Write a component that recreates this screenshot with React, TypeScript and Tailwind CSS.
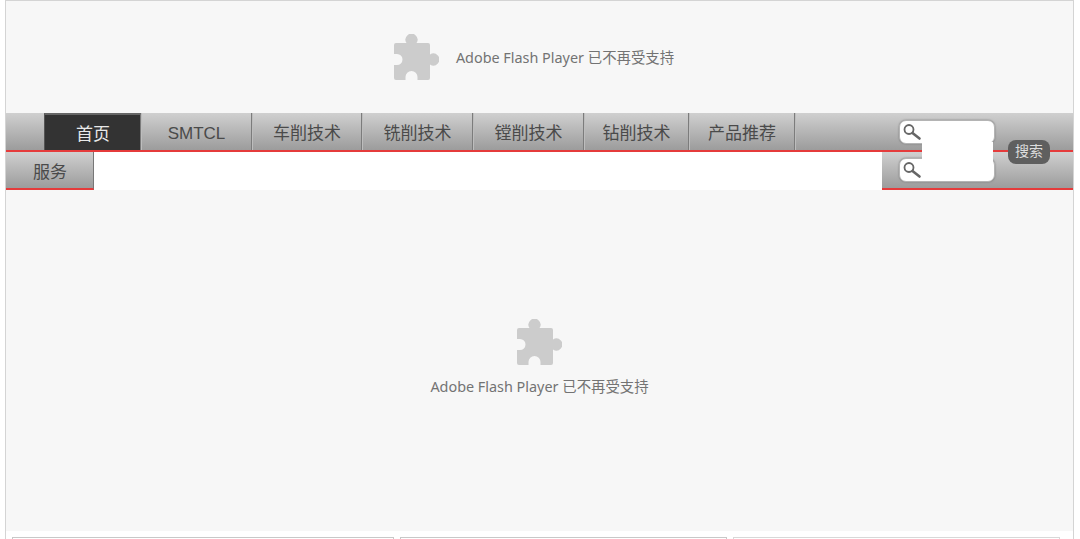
import React from 'react';

const navItems = [
  { label: '首页', width: 'w-[97px]', active: true },
  { label: 'SMTCL', width: 'w-[111px]' },
  { label: '车削技术', width: 'w-[110px]' },
  { label: '铣削技术', width: 'w-[111px]' },
  { label: '镗削技术', width: 'w-[111px]' },
  { label: '钻削技术', width: 'w-[105px]' },
  { label: '产品推荐', width: 'w-[106px]' },
];

const PuzzleIcon = () => (
  <svg width="46" height="46" viewBox="0 0 46 46" className="shrink-0">
    <path
      fill="#cccccc"
      d="M3 9H13.500A6 6 0 1 1 23.500 9H35a2 2 0 0 1 2 2V20.500A6 6 0 1 1 37 30.500V44a2 2 0 0 1-2 2H24.500V43A6 6 0 0 0 12.500 43V46H3a2 2 0 0 1-2-2V31H4A5.500 5.500 0 0 0 4 20H1V11a2 2 0 0 1 2-2z"
    />
  </svg>
);

const SearchBox = () => (
  <div className="flex h-[24px] w-[96px] items-start rounded-[7px] border border-[#b4b4b4] bg-white pl-[2px] pt-[2px] shadow-[0_0_2px_#777]">
    <svg width="20" height="18" viewBox="0 0 20 18" fill="none" stroke="#666666">
      <circle cx="7" cy="6.500" r="4.500" strokeWidth="1.800" />
      <path d="M10.500 10l7 5.500" strokeWidth="2.600" strokeLinecap="round" />
    </svg>
  </div>
);

const NavItem = ({ label, width, active }: { label: string; width: string; active?: boolean }) => (
  <div
    className={`flex h-full items-center justify-center border-r border-[#7c7c7c] pt-[5px] text-[17px] shadow-[1px_0_0_#bdbdbd] ${width} ${
      active
        ? 'border-t-2 border-l border-t-[#666] border-l-[#555] bg-[#333333] pl-[1px] text-[#e8e8e8]'
        : 'pl-[1px] text-[#4a4a4a]'
    }`}
  >
    {label}
  </div>
);

export default function App() {
  return (
    <div className="relative h-[539px] w-[1080px] overflow-hidden bg-white font-['Liberation_Sans','Noto_Sans_CJK_SC',sans-serif]">
      <div className="ml-[5px] mr-[6px] h-[539px] border-x border-t border-[#d4d4d4] bg-white">
        {/* top flash block */}
        <div className="flex h-[112px] items-center justify-center gap-[17px] bg-[#f7f7f7] pr-[12px]">
          <PuzzleIcon />
          <span className="pt-[2px] font-['Noto_Sans','Noto_Sans_CJK_SC',sans-serif] text-[14.4px] text-[#737373]">
            Adobe Flash Player 已不再受支持
          </span>
        </div>

        {/* nav rows */}
        <div className="flex h-[77px]">
          <div className="w-[876px]">
            <div className="flex h-[39px] border-b-2 border-[#e53b3b] bg-gradient-to-b from-[#d0d0d0] to-[#9c9c9c]">
              <div className="w-[38px]" />
              {navItems.map((item) => (
                <NavItem key={item.label} {...item} />
              ))}
            </div>
            <div className="flex h-[38px] w-[88px] items-center justify-center border-b-2 border-r border-b-[#e53b3b] border-r-[#777] bg-gradient-to-b from-[#d0d0d0] to-[#9c9c9c] pl-[1px] pt-[5px] text-[17px] text-[#4a4a4a]">
              服务
            </div>
          </div>
          <div className="w-[191px]">
            <div className="h-[39px] border-b-2 border-[#e53b3b] bg-gradient-to-b from-[#d0d0d0] to-[#9c9c9c] pl-[17px] pt-[7px]">
              <SearchBox />
            </div>
            <div className="h-[38px] border-b-2 border-[#e53b3b] bg-gradient-to-b from-[#d0d0d0] to-[#9c9c9c] pl-[17px] pt-[6px]">
              <SearchBox />
            </div>
          </div>
        </div>

        {/* main flash block */}
        <div className="flex h-[341px] flex-col items-center bg-[#f7f7f7] pt-[129px]">
          <div className="mr-[2px]">
            <PuzzleIcon />
          </div>
          <span className="mt-[11px] font-['Noto_Sans','Noto_Sans_CJK_SC',sans-serif] text-[14.4px] text-[#737373]">
            Adobe Flash Player 已不再受支持
          </span>
        </div>

        {/* bottom boxes */}
        <div className="flex gap-[6px] pl-[6px] pt-[6px]">
          <div className="h-[8px] w-[382px] border border-[#c8c8c8]" />
          <div className="h-[8px] w-[327px] border border-[#c8c8c8]" />
          <div className="h-[8px] w-[327px] border border-[#d8d8d8]" />
        </div>
      </div>

      {/* white patch between the search boxes */}
      <div className="absolute left-[922px] top-[142px] h-[21px] w-[71px] bg-white" />
      {/* search button */}
      <div className="absolute left-[1008px] top-[140px] flex h-[24px] w-[42px] items-center justify-center rounded-[8px] bg-[#5f5f5f] pb-[1px] text-[14px] text-[#dddddd]">
        搜索
      </div>
    </div>
  );
}
